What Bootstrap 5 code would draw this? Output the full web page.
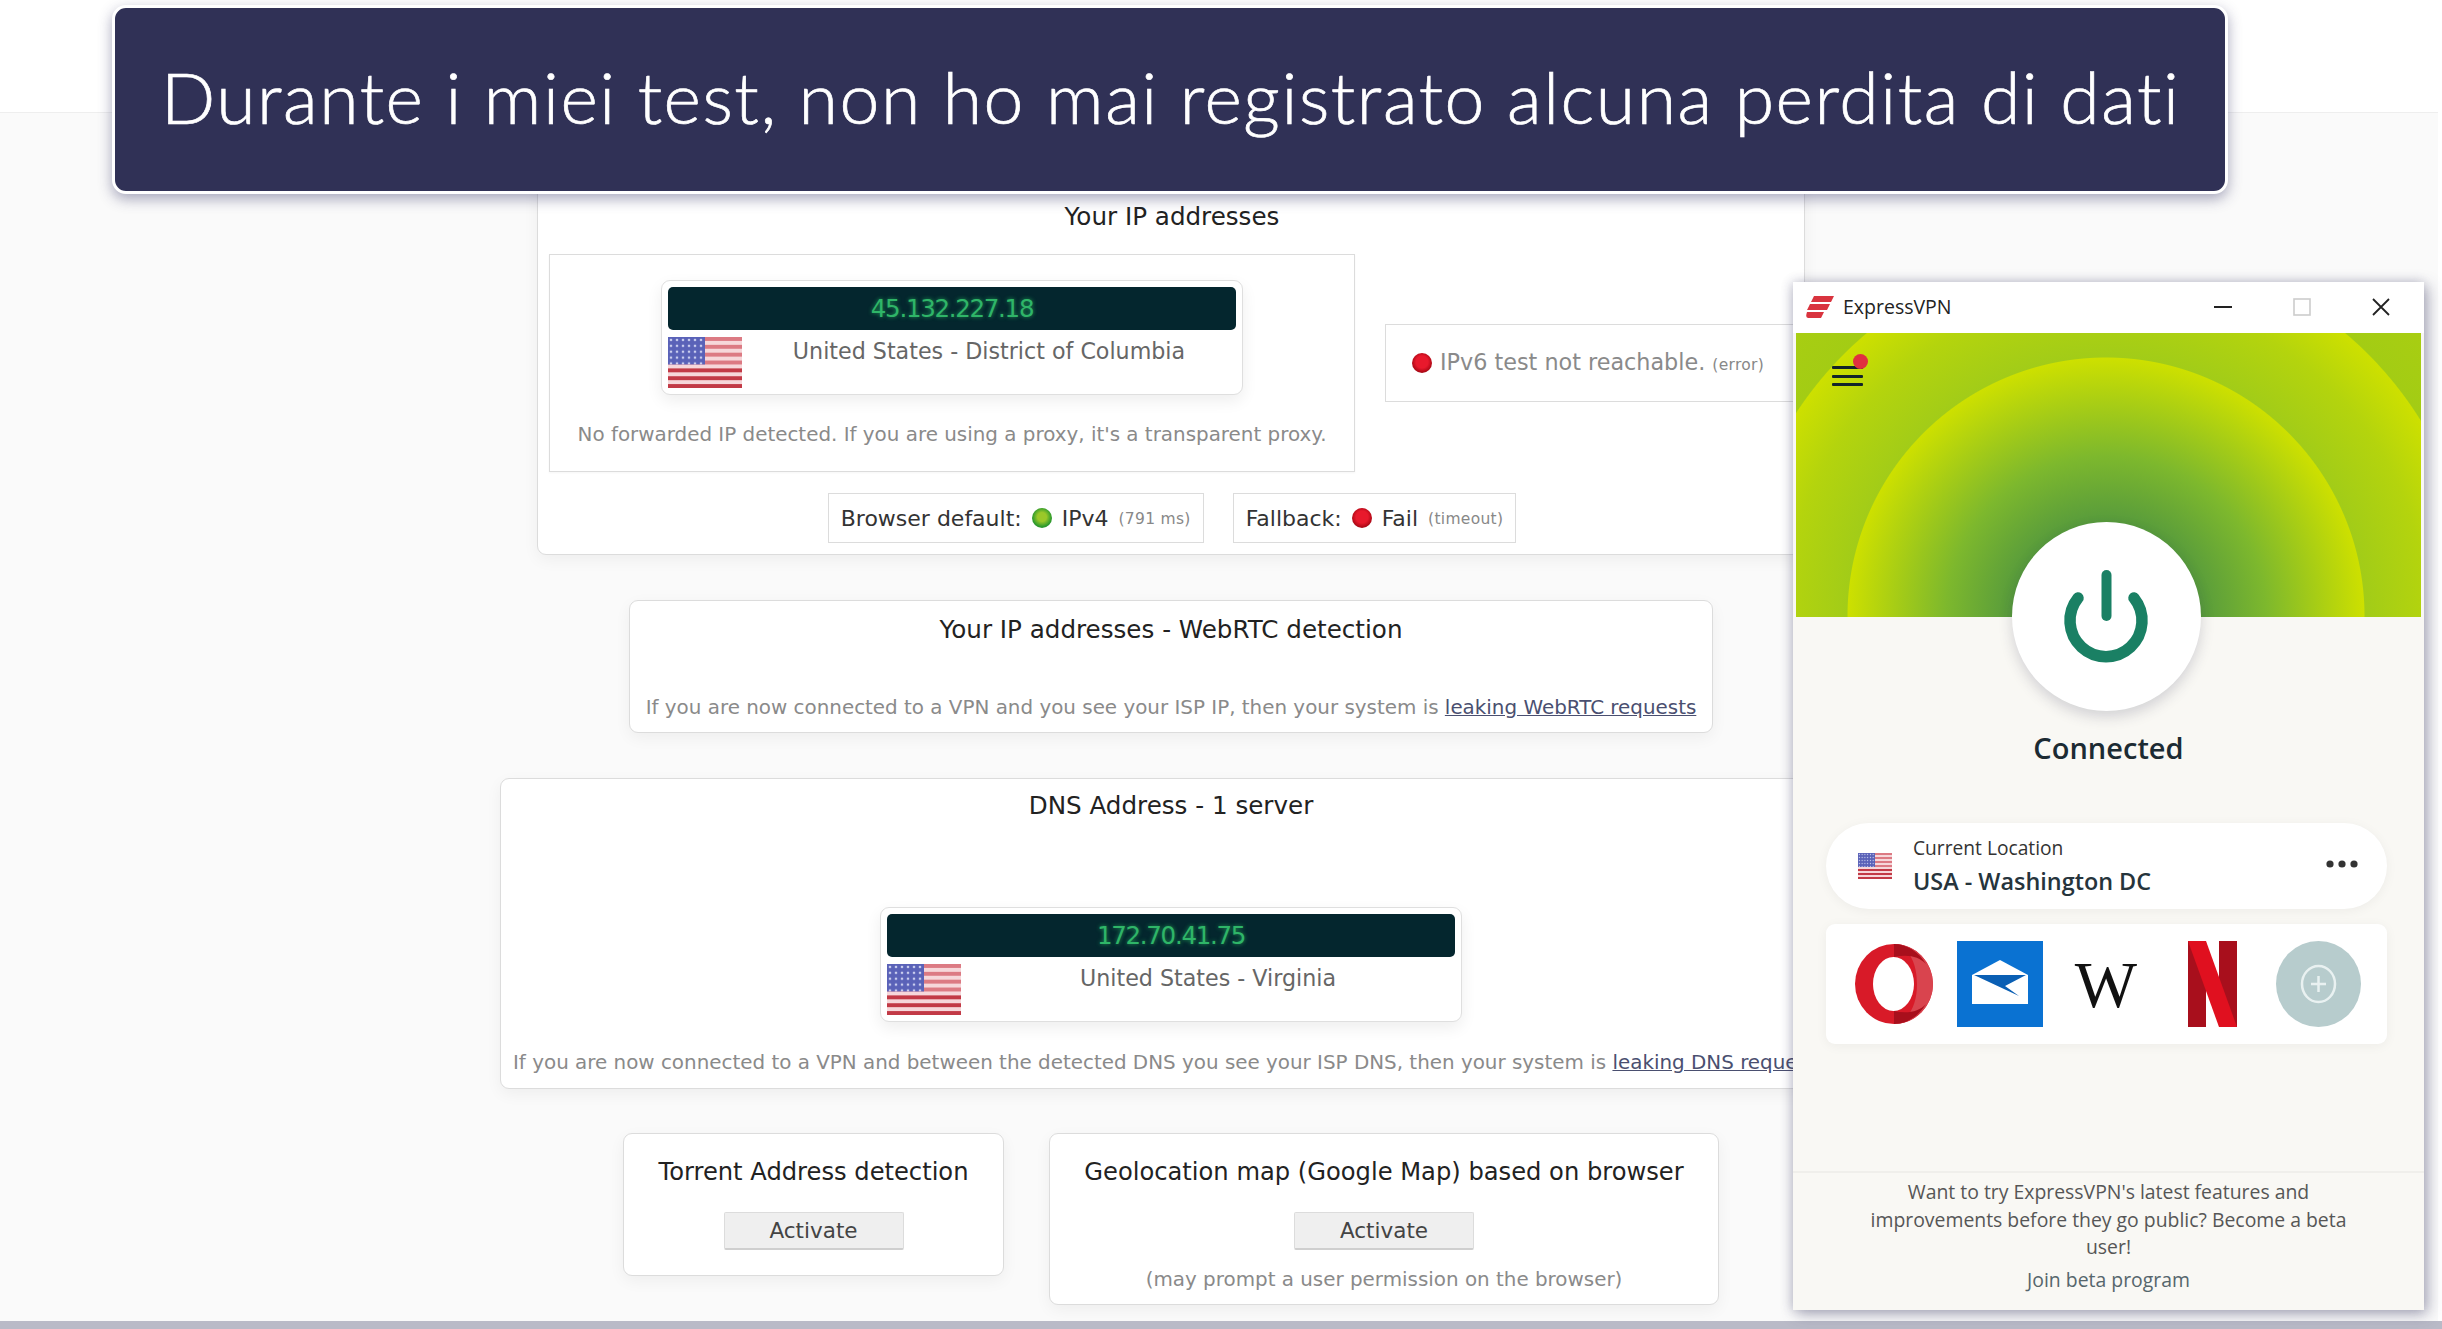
<!DOCTYPE html>
<html lang="it">
<head>
<meta charset="utf-8">
<title>ExpressVPN leak test</title>
<link href="https://cdn.jsdelivr.net/npm/bootstrap@5.3.0/dist/css/bootstrap.min.css" rel="stylesheet">
<style>
html,body{margin:0;height:100%;overflow:hidden;background:#fff}
body{position:relative;width:2442px;height:1329px;font-family:"DejaVu Sans",sans-serif;color:#222}
.top-strip{height:112px;background:#fff}
.stage{height:1209px;width:2438px;background:#fafafa;border-top:1px solid #eee;overflow:hidden}
.bottom-band{height:8px;background:#b9bac7}
.col-wrap{width:2342px;padding-top:28px}
.banner{position:absolute;left:112px;top:5px;width:2116px;height:189px;background:#303156;border:3px solid #fff;border-radius:14px;box-shadow:0 5px 14px rgba(50,50,100,.42);color:#fff;font-family:Lato,sans-serif;font-weight:300;font-size:71.5px;letter-spacing:1.55px;-webkit-text-stroke:.7px #fff;z-index:5;padding:0 0 5px 46px}
.lt-card{background:#fff;border:1px solid #dcdcdc;border-radius:9px;box-shadow:0 5px 16px rgba(0,0,0,.05);flex:none}
.lt-title{font-size:24.6px;line-height:30px;text-align:center;color:#222}
.lt-note{font-size:19.9px;line-height:24px;color:#8a8a8a;white-space:nowrap;text-align:center}
.lt-note a{color:#4a4f70}
.card-ip{width:1268px;height:414px;padding:60px 9px 0 11px}
.card-ip .lt-title{margin-bottom:22px}
.box-ip{width:806px;height:218px;flex:none;border:1px solid #dcdcdc;padding-top:25px;box-shadow:0 1px 2px rgba(0,0,0,.04)}
.box-v6{width:420px;height:78px;flex:none;margin:70px 0 0 30px;border:1px solid #dcdcdc;border-right:0;padding-left:26px;font-size:22.3px;color:#8a8a8a;white-space:nowrap}
.ip-pill{width:582px;height:115px;background:#fff;border:1px solid #dfdfdf;border-radius:9px;padding:6px;box-shadow:0 6px 16px rgba(0,0,0,.07);margin:0 auto}
.ip-bar{height:43px;background:#04262e;border-radius:5px;color:#2fb568;text-align:center;font-size:24.5px;line-height:43px;letter-spacing:-1.3px;font-weight:400;text-shadow:0 0 4px #1f9a55}
.ip-geo{font-size:22.2px;line-height:28px;color:#666;text-align:center;flex:1;padding-top:7px}
.flag-lg{width:74px;height:51px;margin-top:7px;flex:none;display:block}
.ip-note{margin-top:28px}
.tag-row{margin-top:21px;gap:29px}
.tag-box{height:50px;border:1px solid #dcdcdc;padding:0 12px;font-size:22px;color:#333;white-space:nowrap;gap:10px}
.tag-sm{font-size:15.5px;color:#888;letter-spacing:.3px}
.tag-box .tag-sm{margin-top:4px}
.dot-g,.dot-r{width:20px;height:20px;border-radius:50%;display:inline-block;flex:none}
.dot-g{background:radial-gradient(circle at 50% 45%,#9ac829 0 30%,#2d9a2c 65%,#1d7a25)}
.dot-r{background:radial-gradient(circle at 50% 45%,#e8192c 0 40%,#b50a18 65%,#5a0c12)}
.card-rtc{width:1084px;height:133px;margin-top:45px;padding-top:14px}
.card-rtc .lt-note{margin-top:51px}
.card-dns{width:1342px;height:311px;margin-top:45px;padding-top:12px}
.card-dns .ip-pill{margin-top:86px}
.card-dns .lt-note{margin-top:29px;padding-left:12px;text-align:left}
.act-row{margin-top:44px;gap:45px}
.card-tor{width:381px;height:143px;padding-top:23px}
.card-geo{width:670px;height:172px;padding-top:23px}
.card-tor .lt-title,.card-geo .lt-title{font-size:24.2px}
.btn-act{display:block;width:180px;height:38px;margin:25px auto 0;padding:0;background:#efefef;border:1px solid #dcdcdc;border-bottom:2px solid #cfcfcf;border-radius:2px;color:#444;font-size:21.5px;line-height:35px}
.geo-note{margin-top:18px}
.vpn{position:absolute;left:1793px;top:282px;width:631px;height:1028px;background:#f9f8f4;box-shadow:4px 4px 14px rgba(60,60,100,.4),-2px 0 10px rgba(60,60,100,.2);z-index:4;font-family:"Open Sans",sans-serif}
.vpn-head{height:51px;background:#fff;padding:0 33px 2px 13px;font-size:19.5px;color:#222}
.vpn-name{margin-left:9px}
.win-btn{width:20px;height:20px;display:block;flex:none}
.win-gap{margin-left:59px}
.vpn-hero{height:284px;margin:0 3px;padding:33px 0 0 36px;position:relative;background:radial-gradient(circle at 310px 283px,#55993d 90px,#7db82d 160px,#cde000 258px,#a2cc18 259px,#b4d40d 320px,#cde000 370px,#a3cc14 371px,#aed00f 480px)}
.menu-btn{position:relative;width:31px;height:22px}
.menu-btn i{display:block;height:3px;background:#12242a;margin-bottom:5.5px;border-radius:1px}
.menu-dot{position:absolute;right:-5px;top:-12px;width:15px;height:15px;background:#e0303f;border-radius:50%}
.power{position:absolute;left:216px;top:189px;width:189px;height:189px;background:#fff;border-radius:50%;box-shadow:0 6px 14px rgba(40,40,70,.18);z-index:1}
.conn{margin-top:111px;font-size:29px;line-height:40px;font-weight:600;text-align:center;color:#1c2b33}
.loc{width:561px;height:86px;margin:55px 0 0 33px;background:#fff;border-radius:43px;box-shadow:0 2px 12px rgba(0,0,0,.05);padding:0 29px 0 32px}
.loc-flag{width:34px;height:26px;margin-right:21px;flex:none;display:block}
.loc-a{font-size:19.2px;line-height:24px;color:#333}
.loc-b{font-size:23.4px;line-height:32px;font-weight:600;color:#26343c;margin-top:5px}
.dots3{width:32px;height:8px;flex:none;display:block;margin-top:-4px}
.apps{width:561px;height:120px;margin:15px 0 0 33px;padding:0 16px 0 15px;background:#fff;border-radius:9px;box-shadow:0 2px 12px rgba(0,0,0,.05)}
.app-slot{width:106px;height:86px;flex:none;display:flex;align-items:center;justify-content:center}
.app-w{font-family:"Liberation Serif",serif;font-size:66px;line-height:1;color:#111;margin-top:2px}
.vpn-foot{margin-top:auto;height:139px;border-top:2px solid #f0efeb;text-align:center;font-size:19.4px;line-height:27.5px;color:#565656;padding-top:5px}
.join{margin-top:5px;color:#56666c}
</style>
</head>
<body>
<svg width="0" height="0" class="position-absolute">
<defs>
<pattern id="stars" width="6" height="6" patternUnits="userSpaceOnUse"><rect width="6" height="6" fill="#5a62b8"/><circle cx="3" cy="3" r="1.3" fill="#c9cdee"/></pattern>
<symbol id="usflag" viewBox="0 0 74 52" preserveAspectRatio="none">
<rect width="74" height="52" fill="#f6d7da"/>
<g fill="#dc7a83"><rect y="0" width="74" height="4"/><rect y="8" width="74" height="4"/><rect y="16" width="74" height="4"/><rect y="24" width="74" height="4"/></g>
<g fill="#c23a46"><rect y="32" width="74" height="4"/><rect y="40" width="74" height="4"/><rect y="48" width="74" height="4"/></g>
<rect width="37" height="28" fill="url(#stars)"/>
</symbol>
</defs>
</svg>

<div class="top-strip"></div>
<div class="stage">
  <div class="col-wrap d-flex flex-column align-items-center">
    <div class="lt-card card-ip">
      <div class="lt-title">Your IP addresses</div>
      <div class="d-flex align-items-start">
        <div class="box-ip">
          <div class="ip-pill">
            <div class="ip-bar">45.132.227.18</div>
            <div class="d-flex"><svg class="flag-lg"><use href="#usflag"/></svg><div class="ip-geo">United States - District of Columbia</div></div>
          </div>
          <div class="lt-note ip-note">No forwarded IP detected. If you are using a proxy, it's a transparent proxy.</div>
        </div>
        <div class="box-v6 d-flex align-items-center gap-2"><span class="dot-r"></span><span>IPv6 test not reachable. <span class="tag-sm">(error)</span></span></div>
      </div>
      <div class="d-flex justify-content-center tag-row">
        <div class="tag-box d-flex align-items-center"><span>Browser default:</span><span class="dot-g"></span><span>IPv4</span><span class="tag-sm">(791 ms)</span></div>
        <div class="tag-box d-flex align-items-center"><span>Fallback:</span><span class="dot-r"></span><span>Fail</span><span class="tag-sm">(timeout)</span></div>
      </div>
    </div>

    <div class="lt-card card-rtc">
      <div class="lt-title">Your IP addresses - WebRTC detection</div>
      <div class="lt-note">If you are now connected to a VPN and you see your ISP IP, then your system is <a href="#">leaking WebRTC requests</a></div>
    </div>

    <div class="lt-card card-dns">
      <div class="lt-title">DNS Address - 1 server</div>
      <div class="ip-pill">
        <div class="ip-bar">172.70.41.75</div>
        <div class="d-flex"><svg class="flag-lg"><use href="#usflag"/></svg><div class="ip-geo">United States - Virginia</div></div>
      </div>
      <div class="lt-note">If you are now connected to a VPN and between the detected DNS you see your ISP DNS, then your system is <a href="#">leaking DNS requests</a></div>
    </div>

    <div class="d-flex align-items-start act-row">
      <div class="lt-card card-tor">
        <div class="lt-title">Torrent Address detection</div>
        <button type="button" class="btn btn-act">Activate</button>
      </div>
      <div class="lt-card card-geo">
        <div class="lt-title">Geolocation map (Google Map) based on browser</div>
        <button type="button" class="btn btn-act">Activate</button>
        <div class="lt-note geo-note">(may prompt a user permission on the browser)</div>
      </div>
    </div>
  </div>
</div>
<div class="bottom-band"></div>

<div class="banner d-flex align-items-center">Durante i miei test, non ho mai registrato alcuna perdita di dati</div>

<div class="vpn d-flex flex-column">
  <div class="vpn-head d-flex align-items-center">
    <svg width="28" height="22" viewBox="0 0 28 22"><path d="M8 0H28L25 6H5ZM4 8H24L21 14H1ZM1 16H18L15 22H2Q-1 22 1 16Z" fill="#d9343f"/></svg>
    <span class="vpn-name">ExpressVPN</span>
    <div class="d-flex align-items-center ms-auto">
      <svg class="win-btn" viewBox="0 0 20 20"><path d="M1 10H19" stroke="#222" stroke-width="2"/></svg>
      <svg class="win-btn win-gap" viewBox="0 0 20 20"><rect x="2" y="2" width="16" height="16" fill="none" stroke="#ccc" stroke-width="1.6"/></svg>
      <svg class="win-btn win-gap" viewBox="0 0 20 20"><path d="M2 2L18 18M18 2L2 18" stroke="#222" stroke-width="1.8"/></svg>
    </div>
  </div>
  <div class="vpn-hero">
    <div class="menu-btn"><i></i><i></i><i></i><span class="menu-dot"></span></div>
    <div class="power d-flex align-items-center justify-content-center">
      <svg width="189" height="189" viewBox="0 0 189 189"><path d="M66 76A36 36 0 1 0 122 76" fill="none" stroke="#1a8064" stroke-width="11.5" stroke-linecap="round"/><path d="M94.5 53V94" stroke="#1a8064" stroke-width="10" stroke-linecap="round"/></svg>
    </div>
  </div>
  <div class="conn">Connected</div>
  <div class="loc d-flex align-items-center">
    <svg class="loc-flag"><use href="#usflag"/></svg>
    <div class="flex-grow-1"><div class="loc-a">Current Location</div><div class="loc-b">USA - Washington DC</div></div>
    <svg class="dots3" viewBox="0 0 32 8"><circle cx="4" cy="4" r="3.6" fill="#333"/><circle cx="16" cy="4" r="3.6" fill="#333"/><circle cx="28" cy="4" r="3.6" fill="#333"/></svg>
  </div>
  <div class="apps d-flex align-items-center">
    <div class="app-slot"><svg width="78" height="80" viewBox="0 0 78 80"><ellipse cx="39" cy="40" rx="39" ry="40" fill="#d81a28"/><path d="M39 0C60 0 78 18 78 40S60 80 39 80C56 76 62 58 62 40S56 4 39 0Z" fill="#d9444e"/><path d="M39 0C52 0 64 8 71 20C64 12 52 10 39 13ZM39 80C52 80 64 72 71 60C64 68 52 70 39 67Z" fill="#a80f1c"/><ellipse cx="38.5" cy="40" rx="20.5" ry="27" fill="#fff"/></svg></div>
    <div class="app-slot"><svg width="86" height="86" viewBox="0 0 86 86"><rect width="86" height="86" fill="#0a72d2"/><path d="M15 34L43 19L71 34V63H15Z" fill="#fff"/><path d="M17 34H69L48 45L62 55Z" fill="#0a5fb4"/></svg></div>
    <div class="app-slot"><span class="app-w">W</span></div>
    <div class="app-slot"><svg width="49" height="86" viewBox="0 0 49 86"><rect width="18" height="86" fill="#a80f1c"/><rect x="31" width="18" height="86" fill="#a80f1c"/><path d="M0 0H18L49 86H31Z" fill="#e0101f"/></svg></div>
    <div class="app-slot"><svg width="85" height="86" viewBox="0 0 85 86"><ellipse cx="42.5" cy="43" rx="42.5" ry="43" fill="#b7cccd"/><ellipse cx="42.5" cy="43" rx="16.5" ry="18" fill="none" stroke="#e9f1f1" stroke-width="2.5"/><path d="M35 43H50M42.5 35V51" stroke="#e9f1f1" stroke-width="2.5"/></svg></div>
  </div>
  <div class="vpn-foot">
    <div>Want to try ExpressVPN's latest features and<br>improvements before they go public? Become a beta<br>user!</div>
    <div class="join">Join beta program</div>
  </div>
</div>
<script src="https://cdn.jsdelivr.net/npm/bootstrap@5.3.0/dist/js/bootstrap.bundle.min.js"></script>
</body>
</html>
